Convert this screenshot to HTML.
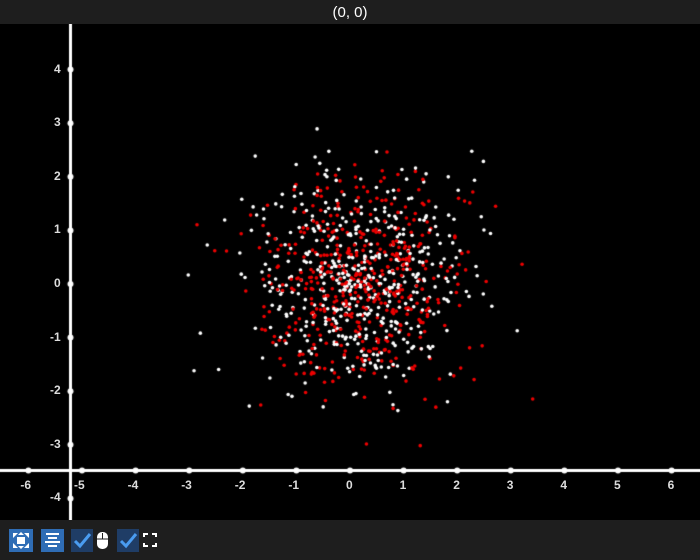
<!DOCTYPE html>
<html><head><meta charset="utf-8"><style>
html,body{margin:0;padding:0;background:#1e1e1e;width:700px;height:560px;overflow:hidden;font-family:"Liberation Sans",sans-serif}
#title{position:absolute;left:0;top:0;width:700px;height:24px;background:#1e1e1e;color:#fff;font-size:15px;text-align:center;line-height:25px}
#plot{position:absolute;left:0;top:24px;width:700px;height:496px;background:#000}
canvas{position:absolute;left:0;top:0}
.lbl{position:absolute;color:#ddd;font-size:12px;font-weight:bold;}
#tb{position:absolute;left:0;top:520px;width:700px;height:40px;background:#1e1e1e}
</style></head><body>
<div id="title">(0, 0)</div>
<div id="plot"><canvas id="c" width="700" height="496"></canvas><div id="labels"></div></div>
<div id="tb">
<svg width="170" height="40" style="position:absolute;left:0;top:0">
<rect x="9" y="9" width="24" height="23" fill="#2f6db5"/>
<g fill="#fff"><rect x="17" y="17" width="8" height="7"/>
<polygon points="13,13 18,13 13,18"/><polygon points="29,13 24,13 29,18"/><polygon points="13,28 18,28 13,23"/><polygon points="29,28 24,28 29,23"/>
<polygon points="21,12 24,15 18,15"/><polygon points="21,29 24,26 18,26"/></g>
<rect x="41" y="9" width="23" height="23" fill="#2f6db5"/>
<g fill="#fff"><rect x="46" y="13" width="13" height="2"/><rect x="48" y="17" width="9" height="2"/><rect x="45" y="21" width="15" height="2"/><rect x="48" y="25" width="9" height="2"/></g>
<rect x="71" y="9" width="22" height="23" fill="#1f3d66"/>
<polyline points="75,21 80,26 90,14" fill="none" stroke="#4a9cf0" stroke-width="3"/>
<rect x="97" y="12" width="11" height="17" rx="5" fill="#fff"/><line x1="102.5" y1="13" x2="102.5" y2="19" stroke="#1e1e1e" stroke-width="1"/><line x1="97" y1="19" x2="108" y2="19" stroke="#1e1e1e" stroke-width="1"/>
<rect x="117" y="9" width="22" height="23" fill="#1f3d66"/>
<polyline points="121,21 126,26 136,14" fill="none" stroke="#4a9cf0" stroke-width="3"/>
<g fill="none" stroke="#fff" stroke-width="2"><polyline points="144,17 144,14 148,14"/><polyline points="152,14 156,14 156,17"/><polyline points="144,23 144,26 148,26"/><polyline points="152,26 156,26 156,23"/></g>
</svg></div>
<script>
var c=document.getElementById('c').getContext('2d');
var ox=350,oy=260,u=53.6;
var s=987654321;function r(){s^=s<<13;s^=s>>>17;s^=s<<5;return ((s>>>0)%1000000)/1000000;}
function g(){var a=r()||1e-6,b=r();return Math.sqrt(-2*Math.log(a))*Math.cos(2*Math.PI*b);}
for(var i=0;i<1000;i++){c.fillStyle=i%2?'#ee0000':'#ffffff';var x=0.2+1.0*g(),y=0.0+1.0*g();c.beginPath();c.arc(ox+x*u,oy-y*u,1.8,0,7);c.fill();}
c.strokeStyle='#fff';c.lineWidth=3;c.beginPath();c.moveTo(0,446.5);c.lineTo(700,446.5);c.moveTo(70.5,0);c.lineTo(70.5,496);c.stroke();
c.fillStyle='#fff';var L=document.getElementById('labels'),h='';
for(var k=-6;k<=6;k++){var px=ox+k*u;c.beginPath();c.arc(px,446.5,3,0,7);c.fill();h+='<div class="lbl" style="left:'+(px-(k<0?8:4))+'px;top:454px">'+k+'</div>';}
for(var k=-4;k<=4;k++){var py=oy-k*u;c.beginPath();c.arc(70.5,py,3,0,7);c.fill();h+='<div class="lbl" style="left:'+(k<0?50:54)+'px;top:'+(py-8)+'px">'+k+'</div>';}
L.innerHTML=h;
</script>
</body></html>
